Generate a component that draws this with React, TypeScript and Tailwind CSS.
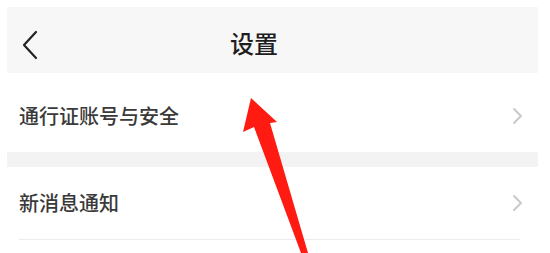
import React from "react"

const Chevron = () => (
    <svg width="14" height="18" viewBox="0 0 14 18" fill="none">
        <path d="M4 2 L11 9 L4 16" stroke="#c9c9c9" strokeWidth="2" strokeLinecap="round" strokeLinejoin="round" />
    </svg>
)

const Row = ({ label, border }: { label: string; border?: boolean }) => (
    <div className="pl-[12px] pr-[18px]">
        <div className={`flex items-center justify-between h-[73px] ${border ? "border-b border-[#ececec]" : ""}`}>
            <span className="text-[20px] font-medium text-[#3a3a3a] leading-none">{label}</span>
            <div className="mr-[-4px]"><Chevron /></div>
        </div>
    </div>
)

export default function App() {
    return (
        <div
            className="relative w-[550px] h-[253px] bg-white overflow-hidden"
            style={{ fontFamily: '"Noto Sans CJK SC", "Noto Sans", sans-serif' }}
        >
            <div className="ml-[7px] w-[531px] pt-[7px]">
                <div className="relative flex items-center h-[66px] bg-[#f7f7f7] pl-[223px] pt-[6px]">
                    <svg className="absolute left-[14px] top-[23px]" width="18" height="30" viewBox="0 0 18 30" fill="none">
                        <path d="M15 2 L3 15 L15 28" stroke="#222222" strokeWidth="2.2" strokeLinecap="round" strokeLinejoin="round" />
                    </svg>
                    <span className="text-[24px] font-medium text-[#1e1e1e] leading-none">设置</span>
                </div>
                <div className="pt-[6px]">
                    <Row label="通行证账号与安全" />
                </div>
                <div className="h-[15px] bg-[#f3f3f3]" />
                <Row label="新消息通知" border />
            </div>
            <svg className="absolute left-0 top-0 pointer-events-none" width="550" height="253" viewBox="0 0 550 253">
                <polygon
                    points="251,98 277,122 270,123 308,253 301,253 254,127 243,132"
                    fill="#ff1a12"
                />
            </svg>
        </div>
    )
}
